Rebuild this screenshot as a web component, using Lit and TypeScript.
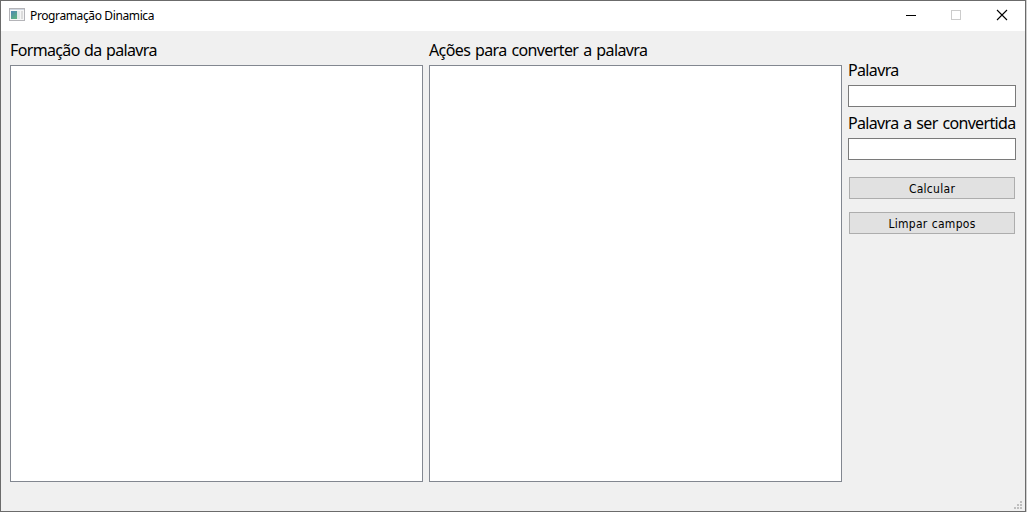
import { LitElement, html, css } from "lit";
import { customElement } from "lit/decorators.js";

@customElement("app-root")
export class AppRoot extends LitElement {
  static styles = css`
    :host { display: block; width: 1027px; height: 512px; background: #d0d0d0; overflow: hidden; color: #000; }
    * { box-sizing: border-box; }
    .window { width: 1026px; height: 512px; border: 1px solid #6b6b6b; background: #f0f0f0; display: flex; flex-direction: column; }
    .titlebar { height: 30px; flex: none; background: #fff; display: flex; align-items: center; padding-left: 8px; }
    .appicon { display: block; flex: none; margin-top: -1px; }
    .title { font: 12px/30px "Noto Sans", "Open Sans", sans-serif; margin-left: 5px; flex: 1; white-space: nowrap; letter-spacing: -0.38px; }
    .controls { display: block; flex: none; }
    .content { display: flex; gap: 6px; padding: 8px 9px 0; height: 451px; flex: none; }
    .column { width: 413px; display: flex; flex-direction: column; }
    .label { font: 16px/22px "Noto Sans", "Open Sans", sans-serif; white-space: nowrap; height: 26px; flex: none; }
    .l1 { letter-spacing: -0.65px; word-spacing: 0.9px; }
    .l2 { letter-spacing: -0.62px; word-spacing: 1.3px; }
    .l3 { letter-spacing: -0.65px; }
    .l4 { letter-spacing: -0.67px; word-spacing: 1.3px; }
    .list { flex: 1; background: #fff; border: 1px solid #828790; }
    .side { width: 168px; display: flex; flex-direction: column; padding-top: 20px; }
    .field { display: block; width: 168px; height: 22px; margin: 0 0 5px; padding: 0 3px; border: 1px solid #7a7a7a; border-radius: 0; background: #fff; outline: none; }
    .button { display: block; width: 166px; height: 22px; margin: 12px 1px 1px; padding: 2px 0 0; border: 1px solid #adadad; border-radius: 0; background: #e1e1e1; color: #000; font: 12px/18px "DejaVu Sans Condensed", "DejaVu Sans", sans-serif; letter-spacing: 0.28px; word-spacing: 0.5px; text-align: center; }
    .status { flex: 1; display: flex; justify-content: flex-end; align-items: flex-end; padding: 0 3px 2px 0; }
    .grip { display: block; }
  `;

  render() {
    return html`
      <div class="window">
        <div class="titlebar">
          <svg class="appicon" width="16" height="15" shape-rendering="crispEdges">
            <defs>
              <linearGradient id="g" x1="0" y1="0" x2="0.6" y2="1">
                <stop offset="0" stop-color="#4c86b4" /><stop offset="1" stop-color="#5cb083" />
              </linearGradient>
            </defs>
            <rect x="0.5" y="0.5" width="15" height="12" fill="#f6f6f6" stroke="#b4b4b8" />
            <rect x="1" y="1" width="14" height="1" fill="#cfd6e0" />
            <rect x="2" y="3" width="6" height="8" fill="url(#g)" />
            <rect x="8" y="3" width="3" height="8" fill="#dfe8e8" />
            <rect x="12" y="3" width="2" height="8" fill="#dcdcdc" />
          </svg>
          <span class="title">Programação Dinamica</span>
          <svg class="controls" width="137" height="30">
            <rect x="18" y="14" width="10" height="1" fill="#000" />
            <rect x="63.5" y="9.5" width="9" height="9" fill="none" stroke="#ccc" />
            <path d="M109 9L119 19M119 9L109 19" fill="none" stroke="#000" stroke-width="1.1" />
          </svg>
        </div>
        <div class="content">
          <div class="column">
            <div class="label"><span class="l1">Formação da palavra</span></div>
            <div class="list"></div>
          </div>
          <div class="column">
            <div class="label"><span class="l2">Ações para converter a palavra</span></div>
            <div class="list"></div>
          </div>
          <div class="side">
            <div class="label"><span class="l3">Palavra</span></div>
            <input class="field" />
            <div class="label"><span class="l4">Palavra a ser convertida</span></div>
            <input class="field" />
            <button class="button">Calcular</button>
            <button class="button">Limpar campos</button>
          </div>
        </div>
        <div class="status">
          <svg class="grip" width="8" height="8" fill="#bfbfbf">
            <rect x="6" y="0" width="2" height="2" />
            <rect x="3" y="3" width="2" height="2" /><rect x="6" y="3" width="2" height="2" />
            <rect x="0" y="6" width="2" height="2" /><rect x="3" y="6" width="2" height="2" /><rect x="6" y="6" width="2" height="2" />
          </svg>
        </div>
      </div>
    `;
  }
}
